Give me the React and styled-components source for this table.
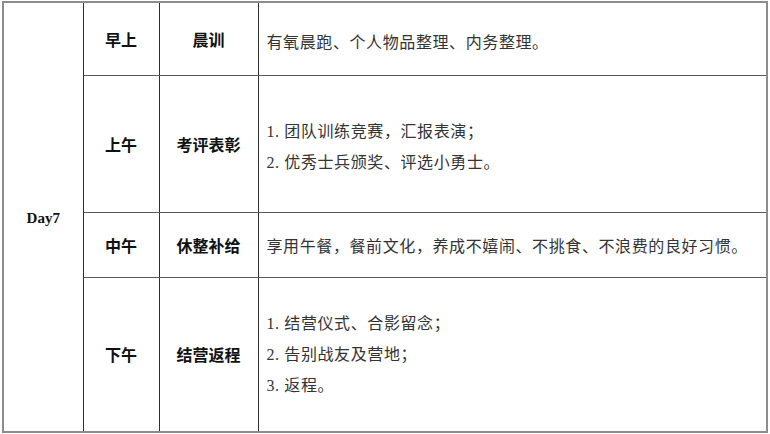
import React from 'react';
import styled, { createGlobalStyle } from 'styled-components';

const GlobalStyle = createGlobalStyle`
  html, body {
    margin: 0;
    padding: 0;
    background: #fff;
  }
`;

const Page = styled.div`
  width: 770px;
  height: 434px;
  padding: 1px 2px 0 2px;
  box-sizing: border-box;
  background: #fff;
`;

const Table = styled.table`
  width: 766px;
  height: 432px;
  border-collapse: collapse;
  table-layout: fixed;
  border: 2px solid #8d8d8d;
`;

const Row = styled.tr`
  height: ${(p) => p.h}px;
`;

const Cell = styled.td`
  border-left: 1px solid #2e2e2e;
  border-right: 1px solid #2e2e2e;
  border-top: 1px solid #5a5a5a;
  border-bottom: 1px solid #5a5a5a;
  padding: 0;
  vertical-align: middle;
`;

const DayCell = styled(Cell)`
  text-align: center;
  font-family: "Liberation Serif", "Noto Sans CJK SC", serif;
  font-weight: bold;
  font-size: 15px;
  color: #111;
  padding-top: 2px;
`;

const HeadCell = styled(Cell)`
  text-align: center;
  font-family: "Noto Sans CJK SC", sans-serif;
  font-weight: bold;
  font-size: 16px;
  color: #111;
`;

const TextCell = styled(Cell)`
  padding: ${(p) => p.pt || 0}px 8px 0 8px;
  font-family: "Liberation Serif", "Noto Sans CJK SC", serif;
  font-size: 16px;
  letter-spacing: 0.6px;
  color: #333;
  line-height: 31px;
`;

const Line = styled.div`
  white-space: pre;
`;

const schedule = [
  { time: '早上', title: '晨训', h: 73, pt: 8, lines: ['有氧晨跑、个人物品整理、内务整理。'] },
  { time: '上午', title: '考评表彰', h: 137, pt: 6, lines: ['1. 团队训练竞赛，汇报表演；', '2. 优秀士兵颁奖、评选小勇士。'] },
  { time: '中午', title: '休整补给', h: 65, pt: 4, lines: ['享用午餐，餐前文化，养成不嬉闹、不挑食、不浪费的良好习惯。'] },
  { time: '下午', title: '结营返程', h: 155, pt: 0, lines: ['1. 结营仪式、合影留念；', '2. 告别战友及营地；', '3. 返程。'] },
];

function App() {
  return (
    <Page>
      <GlobalStyle />
      <Table>
        <colgroup>
          <col style={{ width: 80 }} />
          <col style={{ width: 76 }} />
          <col style={{ width: 99 }} />
          <col />
        </colgroup>
        <tbody>
          {schedule.map((item, i) => (
            <Row key={item.time} h={item.h}>
              {i === 0 && <DayCell rowSpan={schedule.length}>Day7</DayCell>}
              <HeadCell>{item.time}</HeadCell>
              <HeadCell>{item.title}</HeadCell>
              <TextCell pt={item.pt}>
                {item.lines.map((l) => (
                  <Line key={l}>{l}</Line>
                ))}
              </TextCell>
            </Row>
          ))}
        </tbody>
      </Table>
    </Page>
  );
}

export default App;
